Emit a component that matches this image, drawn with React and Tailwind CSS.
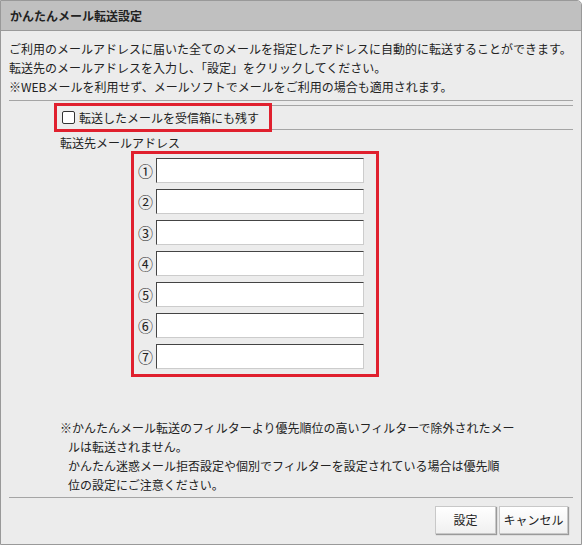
import React from "react";

const nums = ["①", "②", "③", "④", "⑤", "⑥", "⑦"];

const App = () => {
  return (
    <div className="w-[582px] h-[545px] border border-[#999] rounded-tr-[5px] bg-[#ececec] flex flex-col overflow-hidden text-[12px] text-[#222] font-['Noto_Sans_CJK_JP',sans-serif]">
      <div className="h-[30px] shrink-0 bg-[#c0c0c0] border-b border-[#9a9a9a] px-[9px] flex items-center font-bold leading-none">
        かんたんメール転送設定
      </div>
      <div className="flex flex-col px-[8px] pt-[8px]">
        <div className="leading-[19px] whitespace-nowrap">
          <p>ご利用のメールアドレスに届いた全てのメールを指定したアドレスに自動的に転送することができます。</p>
          <p>転送先のメールアドレスを入力し、「設定」をクリックしてください。</p>
          <p>※WEBメールを利用せず、メールソフトでメールをご利用の場合も適用されます。</p>
        </div>
        <div className="mt-[4px] border-t border-[#a5a5a5]" />
        <div className="mt-[4px] ml-[48px] h-[25px] border-y border-[#a5a5a5] flex items-center">
          <label className="-ml-[3px] w-[218px] h-[29px] shrink-0 border-[3px] border-[#e0202e] flex items-center pl-[5px] gap-[4px]">
            <span className="w-[13px] h-[13px] border border-[#333] rounded-[2px] bg-white shrink-0" />
            <span className="leading-none whitespace-nowrap">転送したメールを受信箱にも残す</span>
          </label>
        </div>
        <div className="mt-[5px] ml-[51px] leading-[16px]">転送先メールアドレス</div>
        <div className="ml-[122px] w-[248px] border-[3px] border-[#e0202e] pt-[4px] pb-[5px] pl-[4px] pr-[12px] flex flex-col gap-[6px]">
          {nums.map((n) => (
            <div key={n} className="flex items-center h-[25px]">
              <span className="w-[18px] shrink-0 text-[#222] text-[15px] leading-none">{n}</span>
              <div className="w-[208px] h-[25px] bg-white border border-t-[#444] border-l-[#444] border-r-[#ccc] border-b-[#ccc]" />
            </div>
          ))}
        </div>
        <div className="mt-[41px] ml-[51px] leading-[19px] whitespace-nowrap">
          <p>※かんたんメール転送のフィルターより優先順位の高いフィルターで除外されたメー</p>
          <p className="pl-[8px]">ルは転送されません。</p>
          <p className="pl-[8px]">かんたん迷惑メール拒否設定や個別でフィルターを設定されている場合は優先順</p>
          <p className="pl-[8px]">位の設定にご注意ください。</p>
        </div>
        <div className="mt-[3px] border-t border-[#a5a5a5]" />
        <div className="mt-[8px] flex justify-end gap-[3px] pr-[5px]">
          <button className="w-[61px] h-[28px] border border-[#c8c8c8] bg-linear-to-b from-white to-[#f0f0f0] shadow-[1px_1px_1px_#9a9a9a] text-[12px] text-[#222]">
            設定
          </button>
          <button className="w-[69px] h-[28px] border border-[#c8c8c8] bg-linear-to-b from-white to-[#f0f0f0] shadow-[1px_1px_1px_#9a9a9a] text-[12px] text-[#222]">
            キャンセル
          </button>
        </div>
      </div>
    </div>
  );
};

export default App;
